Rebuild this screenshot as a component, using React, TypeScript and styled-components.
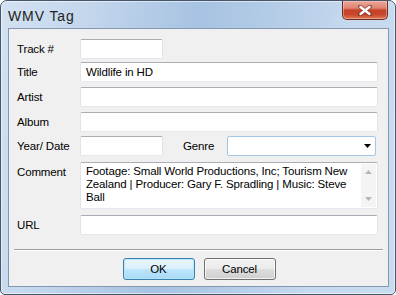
import React from "react";
import styled, { createGlobalStyle } from "styled-components";

const GlobalStyle = createGlobalStyle`
  html, body {
    margin: 0;
    padding: 0;
    background: #ffffff;
  }
  body {
    font-family: "Liberation Sans", Arial, sans-serif;
    font-size: 11.5px;
    letter-spacing: -0.15px;
    color: #000000;
  }
`;

const Window = styled.div`
  width: 396px;
  height: 295px;
  box-sizing: border-box;
  border: 1px solid #45566b;
  border-radius: 7px 7px 5px 5px;
  background: linear-gradient(
    100deg,
    #d3e2f2 0%,
    #c3d6ec 20%,
    #a7c3e2 45%,
    #b2cbe6 60%,
    #c6d9ee 80%,
    #c9dbef 100%
  );
  box-shadow: inset 0 0 0 1px rgba(255, 255, 255, 0.55);
  display: flex;
  flex-direction: column;
  overflow: hidden;
`;

const TitleBar = styled.div`
  height: 27px;
  display: flex;
  align-items: flex-start;
  justify-content: space-between;
  padding-left: 7px;
  padding-right: 7px;
`;

const Title = styled.div`
  font-size: 14px;
  line-height: 14px;
  letter-spacing: 0.9px;
  margin-top: 8px;
  color: #222222;
`;

const CloseButton = styled.div`
  width: 46px;
  height: 19px;
  box-sizing: border-box;
  border: 1px solid #6b2e27;
  border-top: none;
  border-radius: 0 0 5px 5px;
  background: linear-gradient(
    180deg,
    #e9a99b 0%,
    #de8270 40%,
    #c64328 50%,
    #c8462d 75%,
    #e07a55 100%
  );
  box-shadow: inset 0 0 0 1px rgba(255, 210, 200, 0.45);
  display: flex;
  align-items: center;
  justify-content: center;
`;

const Client = styled.div`
  flex: 1;
  margin: 0 6px 7px 7px;
  border: 1px solid #8497b0;
  background: #f0f0f0;
  display: flex;
  flex-direction: column;
  padding: 10px 9px 0 8px;
`;

const Form = styled.div`
  display: flex;
  flex-direction: column;
`;

const Row = styled.div<{ $top: number }>`
  display: flex;
  align-items: flex-start;
  margin-top: ${(p) => p.$top}px;
`;

const Label = styled.div<{ $width?: number; $gap?: number }>`
  width: ${(p) => p.$width ?? 63}px;
  margin-left: ${(p) => p.$gap ?? 0}px;
  flex-shrink: 0;
  line-height: 20px;
  white-space: nowrap;
`;

const TextBox = styled.div<{ $width?: number }>`
  box-sizing: border-box;
  width: ${(p) => p.$width ?? 298}px;
  height: 20px;
  background: #ffffff;
  border: 1px solid #e2e3ea;
  border-top-color: #abadb3;
  border-bottom-color: #e3e9ef;
  border-radius: 2px;
  padding: 0 5px;
  line-height: 18px;
  white-space: nowrap;
`;

const Combo = styled.div`
  box-sizing: border-box;
  width: 149px;
  height: 20px;
  background: #ffffff;
  border: 1px solid #a6c4e4;
  border-radius: 2px;
  display: flex;
  align-items: center;
  justify-content: flex-end;
  padding-right: 4px;
`;

const Memo = styled.div`
  box-sizing: border-box;
  width: 298px;
  height: 47px;
  background: #ffffff;
  border: 1px solid #e2e3ea;
  border-top-color: #abadb3;
  border-bottom-color: #e3e9ef;
  border-radius: 2px;
  display: flex;
`;

const MemoText = styled.div`
  flex: 1;
  padding: 2px 0 0 5px;
  line-height: 13px;
`;

const ScrollBar = styled.div`
  width: 15px;
  margin: 1px 1px 1px 0;
  padding: 6px 0;
  display: flex;
  flex-direction: column;
  justify-content: space-between;
  align-items: center;
  background: #f4f4f4;
`;

const Separator = styled.div`
  margin: 14px -4px 0 -3px;
  height: 1px;
  background: #a0a0a0;
  border-bottom: 1px solid #ffffff;
`;

const ButtonRow = styled.div`
  display: flex;
  justify-content: center;
  gap: 9px;
  margin-top: 7px;
  padding-left: 2px;
`;

const Button = styled.div<{ $default?: boolean }>`
  box-sizing: border-box;
  width: 72px;
  height: 22px;
  border-radius: 3px;
  border: 1px solid ${(p) => (p.$default ? "#3c7fb1" : "#707070")};
  background: ${(p) =>
    p.$default
      ? "linear-gradient(180deg, #eaf6fd 0%, #d9f0fc 50%, #bee6fd 51%, #a7d9f5 100%)"
      : "linear-gradient(180deg, #f2f2f2 0%, #ebebeb 50%, #dddddd 51%, #cfcfcf 100%)"};
  box-shadow: inset 0 0 0 1px
    ${(p) => (p.$default ? "rgba(180, 230, 250, 0.9)" : "rgba(255, 255, 255, 0.7)")};
  display: flex;
  align-items: center;
  justify-content: center;
  line-height: 20px;
`;

function CloseGlyph() {
  return (
    <svg width="14" height="11" viewBox="0 0 14 11">
      <path
        d="M2 1.5 L12 9.5 M12 1.5 L2 9.5"
        stroke="#5a1f18"
        strokeWidth="4"
        strokeLinecap="round"
        opacity="0.55"
      />
      <path
        d="M2.5 2 L11.5 9 M11.5 2 L2.5 9"
        stroke="#ffffff"
        strokeWidth="2.4"
        strokeLinecap="round"
      />
    </svg>
  );
}

function Arrow({ up, color }: { up?: boolean; color: string }) {
  return (
    <svg width="7" height="4" viewBox="0 0 7 4">
      <path d={up ? "M0 4 L3.5 0 L7 4 Z" : "M0 0 L7 0 L3.5 4 Z"} fill={color} />
    </svg>
  );
}

export default function App() {
  return (
    <>
      <GlobalStyle />
      <Window>
        <TitleBar>
          <Title>WMV Tag</Title>
          <CloseButton>
            <CloseGlyph />
          </CloseButton>
        </TitleBar>
        <Client>
          <Form>
            <Row $top={0}>
              <Label>Track #</Label>
              <TextBox $width={83} />
            </Row>
            <Row $top={3}>
              <Label>Title</Label>
              <TextBox>Wildlife in HD</TextBox>
            </Row>
            <Row $top={5}>
              <Label>Artist</Label>
              <TextBox />
            </Row>
            <Row $top={5}>
              <Label>Album</Label>
              <TextBox />
            </Row>
            <Row $top={4}>
              <Label>Year/ Date</Label>
              <TextBox $width={83} />
              <Label $width={44} $gap={20}>
                Genre
              </Label>
              <Combo>
                <Arrow color="#000000" />
              </Combo>
            </Row>
            <Row $top={6}>
              <Label>Comment</Label>
              <Memo>
                <MemoText>
                  Footage: Small World Productions, Inc; Tourism New Zealand |
                  Producer: Gary F. Spradling | Music: Steve Ball
                </MemoText>
                <ScrollBar>
                  <Arrow up color="#b5b5b5" />
                  <Arrow color="#b5b5b5" />
                </ScrollBar>
              </Memo>
            </Row>
            <Row $top={6}>
              <Label>URL</Label>
              <TextBox />
            </Row>
          </Form>
          <Separator />
          <ButtonRow>
            <Button $default>OK</Button>
            <Button>Cancel</Button>
          </ButtonRow>
        </Client>
      </Window>
    </>
  );
}
